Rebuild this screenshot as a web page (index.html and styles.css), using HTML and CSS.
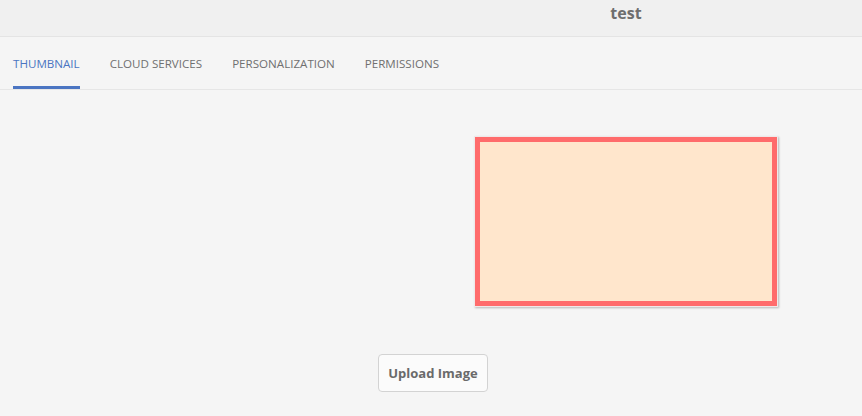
FILE: index.html
```html
<!DOCTYPE html>
<html>
<head>
<meta charset="utf-8">
<link rel="stylesheet" href="styles.css">
</head>
<body>
<header class="topbar"><span class="title">test</span></header>
<nav class="tabs">
  <a class="tab active">THUMBNAIL</a>
  <a class="tab">CLOUD SERVICES</a>
  <a class="tab">PERSONALIZATION</a>
  <a class="tab">PERMISSIONS</a>
</nav>
<main class="content">
  <div class="thumb-row">
    <div class="thumb"><div class="thumb-inner"></div></div>
  </div>
  <div class="actions">
    <button class="upload">Upload Image</button>
  </div>
</main>
</body>
</html>
```
FILE: styles.css
```css
html, body {
  margin: 0;
  padding: 0;
  background: #f5f5f5;
  font-family: "Open Sans", "Liberation Sans", sans-serif;
}
.topbar {
  height: 37px;
  box-sizing: border-box;
  background: #f0f0f0;
  border-bottom: 1px solid #e4e4e4;
  display: flex;
  align-items: center;
  justify-content: center;
  padding-left: 390px;
}
.title {
  font-size: 16px;
  font-weight: 700;
  color: #6e6e6e;
  margin-top: -10px;
}
.tabs {
  display: flex;
  gap: 30px;
  padding-left: 13px;
  border-bottom: 1px solid #e6e6e6;
  box-sizing: border-box;
  height: 53px;
}
.tab {
  display: flex;
  align-items: center;
  font-size: 11.6px;
  color: #707070;
  border-bottom: 3px solid transparent;
  padding-top: 3px;
}
.tab.active {
  color: #4b75c2;
  border-bottom-color: #4b75c2;
}
.content {
  display: flex;
  flex-direction: column;
}
.thumb-row {
  padding-top: 46px;
  padding-left: 474px;
}
.thumb {
  width: 304px;
  height: 171px;
  box-sizing: border-box;
  border: 1px solid #f0e8e8;
  box-shadow: 1px 1px 2px rgba(0,0,0,0.25);
  background: #ffe6cc;
}
.thumb-inner {
  height: 100%;
  box-sizing: border-box;
  border: 5px solid #ff6b6b;
  background: #ffe6cc;
}
.actions {
  display: flex;
  padding-left: 378px;
  padding-top: 47px;
}
.upload {
  width: 110px;
  height: 38px;
  border: 1px solid #d3d3d3;
  border-radius: 4px;
  background: #fbfbfb;
  font-family: inherit;
  font-size: 13px;
  font-weight: 700;
  color: #6a6a6a;
  padding: 0;
}
```
